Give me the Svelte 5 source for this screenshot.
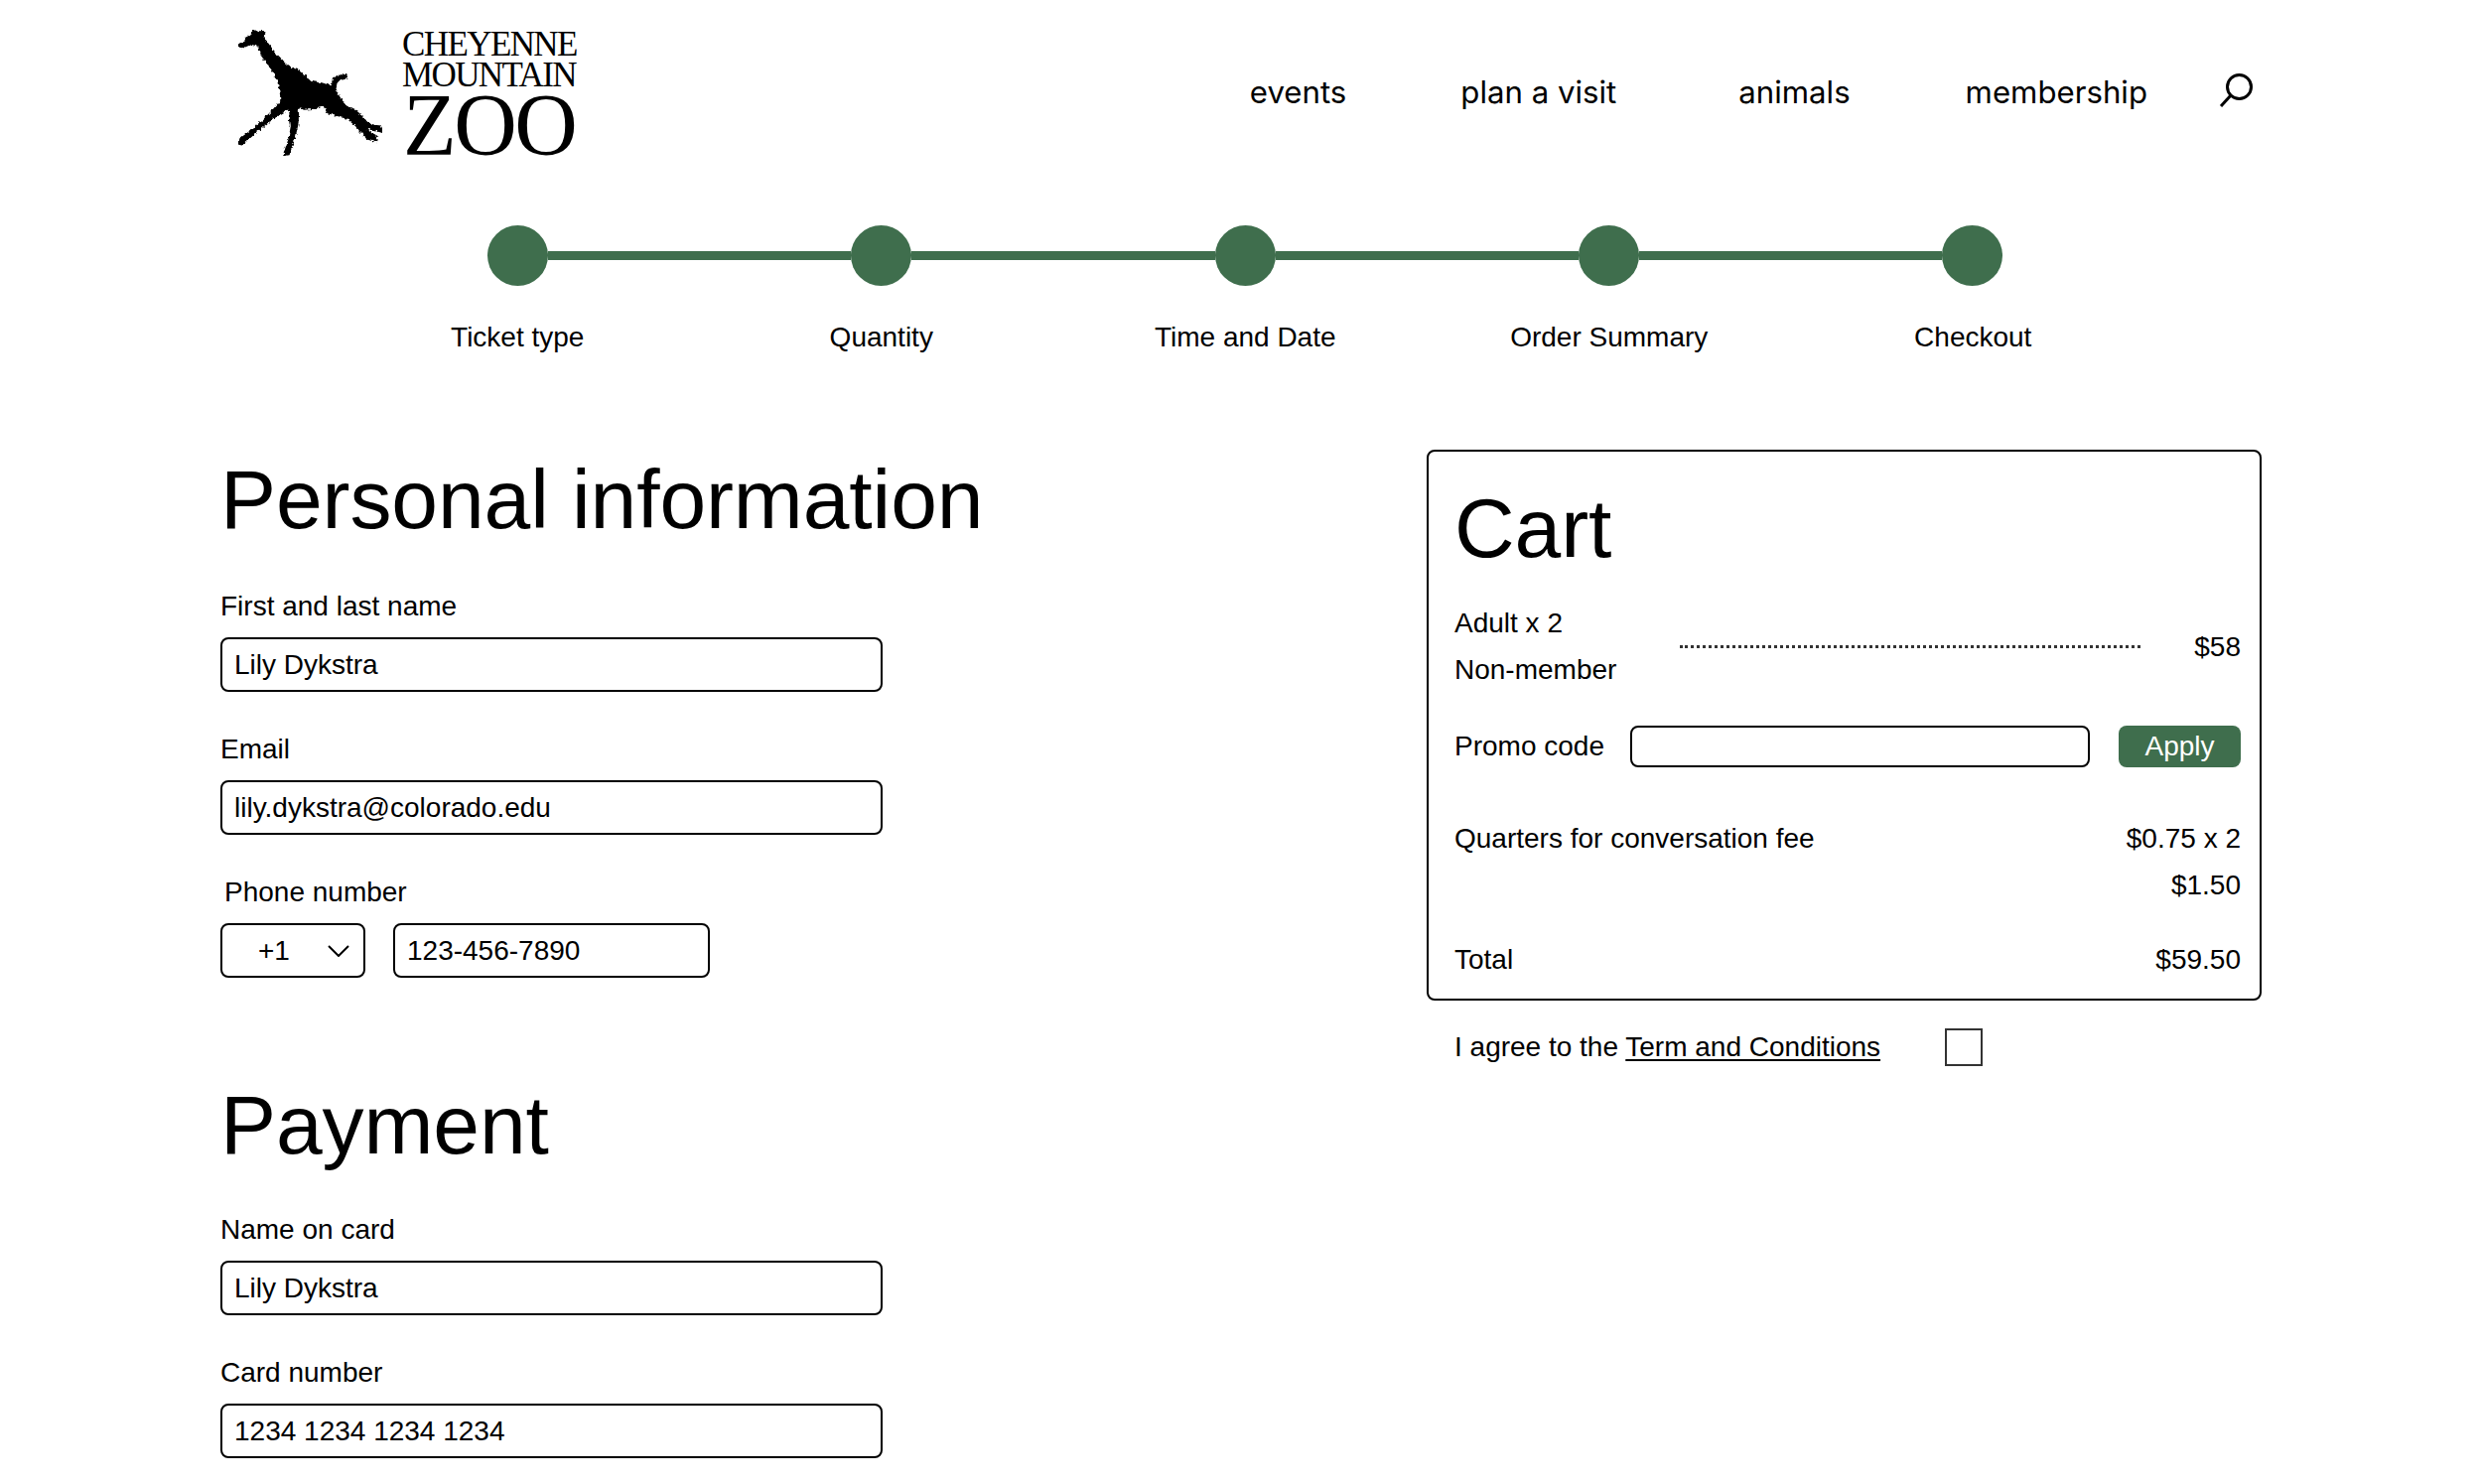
<script>
	const links = ['events', 'plan a visit', 'animals', 'membership'];
	const steps = ['Ticket type', 'Quantity', 'Time and Date', 'Order Summary', 'Checkout'];
</script>

<div class="page">
	<header class="header">
		<div class="logo">
			<svg class="giraffe" viewBox="120 90 435 380" aria-hidden="true">
				<defs>
					<filter id="rough" x="-5%" y="-5%" width="110%" height="110%" color-interpolation-filters="sRGB">
						<feTurbulence type="fractalNoise" baseFrequency="0.1" numOctaves="2" seed="4" />
						<feDisplacementMap in="SourceGraphic" scale="14" xChannelSelector="R" yChannelSelector="G" />
					</filter>
				</defs>
				<path
					filter="url(#rough)"
					stroke="#000"
					stroke-width="7"
					d="M123 138 L140 126 L150 112 L160 105 L168 91 L174 100 L190 96 L198 99 L192 110 L205 128 L220 148 L236 170 L254 188 L276 206 L302 213 L320 230 L330 244 L350 250 L372 253 L395 260 L404 262 L408 242 L420 230 L445 228 L447 235 L425 238 L415 250 L412 270 L422 290 L434 310 L447 323 L470 332 L490 350 L510 372 L530 380 L550 382 L553 397 L530 390 L510 385 L500 378 L515 400 L537 412 L535 425 L510 418 L495 400 L475 377 L450 355 L420 348 L390 338 L380 318 L350 325 L320 328 L298 322 L300 345 L298 375 L290 410 L275 455 L272 465 L260 467 L262 458 L275 420 L282 380 L275 325 L240 345 L205 370 L170 400 L130 435 L120 433 L125 422 L160 395 L195 365 L225 335 L250 305 L250 290 L246 262 L238 235 L221 205 L201 178 L191 165 L180 135 L160 130 L130 143 Z"
				/>
			</svg>
			<div class="wordmark">
				<span class="cheyenne">CHEYENNE</span>
				<span class="mountain">MOUNTAIN</span>
				<span class="zoo">ZOO</span>
			</div>
		</div>
		<nav class="nav">
			{#each links as link}
				<a href="#top">{link}</a>
			{/each}
			<svg class="search" viewBox="0 0 34 34" aria-label="search">
				<circle cx="20.5" cy="13.5" r="12" />
				<path d="M12 22 L2 33" />
			</svg>
		</nav>
	</header>

	<section class="stepper">
		<div class="track">
			{#each steps as step, i}
				{#if i > 0}<span class="line"></span>{/if}
				<span class="dot"></span>
			{/each}
		</div>
		<div class="step-labels">
			{#each steps as step}
				<span>{step}</span>
			{/each}
		</div>
	</section>

	<main class="columns">
		<div class="forms">
			<h1>Personal information</h1>
			<div class="field">
				<label for="name">First and last name</label>
				<input id="name" value="Lily Dykstra" />
			</div>
			<div class="field">
				<label for="email">Email</label>
				<input id="email" value="lily.dykstra@colorado.edu" />
			</div>
			<div class="field">
				<label class="phone-label" for="phone">Phone number</label>
				<div class="phone">
					<div class="code">
						<span>+1</span>
						<svg viewBox="0 0 22 12"><path d="M1 1 L11 11 L21 1" /></svg>
					</div>
					<input id="phone" value="123-456-7890" />
				</div>
			</div>

			<h1 class="payment">Payment</h1>
			<div class="field">
				<label for="card-name">Name on card</label>
				<input id="card-name" value="Lily Dykstra" />
			</div>
			<div class="field">
				<label for="card">Card number</label>
				<input id="card" value="1234 1234 1234 1234" />
			</div>
		</div>

		<aside class="side">
			<div class="cart">
				<h2>Cart</h2>
				<div class="item">
					<div class="item-name">
						<div>Adult x 2</div>
						<div>Non-member</div>
					</div>
					<span class="dots"></span>
					<span>$58</span>
				</div>
				<div class="promo">
					<label for="promo">Promo code</label>
					<input id="promo" />
					<button type="button">Apply</button>
				</div>
				<div class="fee">
					<span>Quarters for conversation fee</span>
					<div class="fee-price">
						<div>$0.75 x 2</div>
						<div>$1.50</div>
					</div>
				</div>
				<div class="total">
					<span>Total</span>
					<span>$59.50</span>
				</div>
			</div>
			<div class="agree">
				<span>I agree to the <a href="#top">Term and Conditions</a></span>
				<span class="check"></span>
			</div>
		</aside>
	</main>
</div>

<style>
	:global(body) {
		margin: 0;
		background: #fff;
		overflow: hidden;
	}

	.page {
		height: 1495px;
		overflow: hidden;
		color: #000;
		font-family: 'Liberation Sans', Arial, sans-serif;
		font-size: 28px;
	}

	.header {
		display: flex;
		justify-content: space-between;
		padding: 30px 222px 0 240px;
		height: 227px;
		box-sizing: border-box;
	}

	.logo {
		display: flex;
		align-items: flex-start;
		gap: 20px;
	}

	.giraffe {
		width: 145px;
		height: 127px;
	}

	.wordmark {
		display: flex;
		flex-direction: column;
		font-family: 'Liberation Serif', 'Times New Roman', serif;
	}

	.cheyenne,
	.mountain {
		font-size: 35px;
		line-height: 30px;
		letter-spacing: -1.6px;
	}

	.mountain {
		margin-top: 1px;
	}

	.zoo {
		font-size: 88px;
		line-height: 66px;
		letter-spacing: -2.5px;
		margin-left: 1px;
		margin-top: 2px;
	}

	.nav {
		display: flex;
		align-items: flex-start;
		font-family: Inter, sans-serif;
		font-size: 31.2px;
		padding-top: 44px;
		gap: 118px;
	}

	.nav a {
		color: #000;
		text-decoration: none;
		line-height: 38px;
	}

	.nav a:nth-child(2) {
		margin: 0 3px 0 -3px;
	}

	.nav a:nth-child(3) {
		margin: 0 -2px 0 2px;
	}

	.search {
		width: 34px;
		height: 34px;
		margin: 0 9px 0 -46px;
		fill: none;
		stroke: #000;
		stroke-width: 3;
	}

	.track {
		display: flex;
		align-items: center;
		padding: 0 483px 0 491px;
	}

	.dot {
		width: 61px;
		height: 61px;
		border-radius: 50%;
		background: #3f6e4d;
		flex: none;
	}

	.line {
		flex: 1;
		height: 9px;
		background: #3f6e4d;
	}

	.step-labels {
		display: grid;
		grid-template-columns: repeat(5, 366.5px);
		padding-left: 338px;
		margin-top: 35px;
		text-align: center;
		line-height: 34px;
	}

	.columns {
		display: flex;
		padding: 0 222px;
		margin-top: 98px;
	}

	.forms {
		width: 1215px;
		flex: none;
	}

	h1,
	h2 {
		font-weight: 400;
		font-size: 84px;
		letter-spacing: -0.1px;
		line-height: 96px;
		margin: 0;
	}

	h1 {
		margin-bottom: 43px;
	}

	.payment {
		margin-top: 100px;
		margin-bottom: 41px;
	}

	.field {
		margin-bottom: 41px;
		display: flex;
		flex-direction: column;
		align-items: flex-start;
	}

	.field label {
		line-height: 34px;
		margin-bottom: 14px;
	}

	.phone-label {
		margin-left: 4px;
	}

	input {
		font: inherit;
		color: #000;
		box-sizing: border-box;
		border: 2px solid #000;
		border-radius: 8px;
		background: #fff;
		outline: none;
	}

	.field input {
		width: 667px;
		height: 55px;
		padding: 0 12px;
	}

	.phone {
		display: flex;
		gap: 28px;
	}

	.phone input {
		width: 319px;
	}

	.code {
		box-sizing: border-box;
		width: 146px;
		height: 55px;
		border: 2px solid #000;
		border-radius: 8px;
		display: flex;
		align-items: center;
		justify-content: space-between;
		padding: 0 14px 0 36px;
	}

	.code svg {
		width: 22px;
		height: 12px;
		fill: none;
		stroke: #000;
		stroke-width: 2;
	}

	.side {
		width: 841px;
		flex: none;
		margin-top: -2px;
	}

	.cart {
		box-sizing: border-box;
		width: 841px;
		height: 555px;
		border: 2px solid #000;
		border-radius: 8px;
		padding: 29px 19px 0 26px;
	}

	.item {
		display: flex;
		align-items: center;
		margin-top: 24px;
		line-height: 47px;
	}

	.item-name {
		width: 227px;
	}

	.dots {
		width: 464px;
		border-top: 3px dotted #333;
	}

	.item > span:last-child {
		margin-left: auto;
	}

	.promo {
		display: flex;
		align-items: center;
		margin-top: 33px;
	}

	.promo input {
		width: 463px;
		height: 42px;
		margin-left: 26px;
	}

	.promo button {
		font: inherit;
		color: #fff;
		background: #3f6e4d;
		border: none;
		border-radius: 8px;
		width: 123px;
		height: 42px;
		margin-left: auto;
		padding: 0;
	}

	.fee {
		display: flex;
		justify-content: space-between;
		margin-top: 48px;
		line-height: 47px;
	}

	.fee-price {
		text-align: right;
	}

	.total {
		display: flex;
		justify-content: space-between;
		margin-top: 28px;
		line-height: 47px;
	}

	.agree {
		display: flex;
		align-items: center;
		padding-left: 28px;
		margin-top: 28px;
	}

	.agree a {
		color: #000;
		text-decoration: underline;
		text-underline-offset: 3px;
	}

	.check {
		box-sizing: border-box;
		width: 38px;
		height: 38px;
		border: 2px solid #333;
		margin-left: 65px;
	}
</style>
